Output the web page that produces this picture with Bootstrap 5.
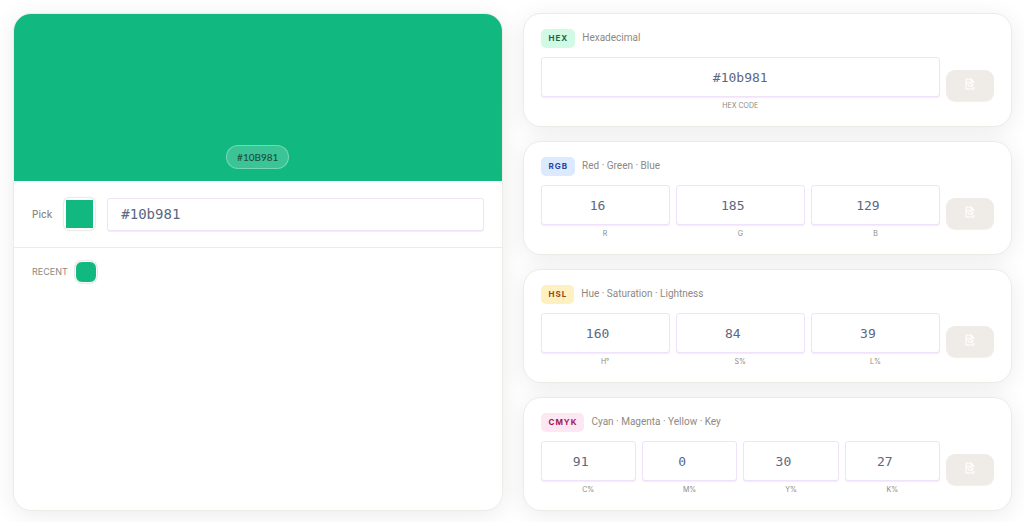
<!DOCTYPE html>
<html lang="en">
<head>
<meta charset="utf-8">
<meta name="viewport" content="width=device-width, initial-scale=1">
<title>Color Converter</title>
<link href="https://cdn.jsdelivr.net/npm/bootstrap@5.3.0/dist/css/bootstrap.min.css" rel="stylesheet">
<style>
:root { --pick: #11b981; --line: #ecebe6; --muted: #8d8982; --lilac: #f0e2fa; }
body { font-family: Inter, "Liberation Sans", sans-serif; font-size: 10px; line-height: 12px; color: var(--muted); background: #fff; }
.page { padding: 13px 12px 11px 13px; }
.page > .row { --bs-gutter-x: 20px; }
.formats { gap: 14px; }
.panel { border: 1px solid var(--line); border-radius: 18px; background: #fff; box-shadow: 0 4px 24px rgba(0,0,0,.08); }
.preview { height: 167px; padding-bottom: 12px; background: var(--pick); }
.hex-pill { padding: 5px 10px; color: #1b4d3a; background: rgba(255,255,255,.18); border: 1px solid rgba(255,255,255,.3); font-family: Lato, sans-serif; font-size: 10px; font-weight: 500; }
.pick-row { padding: 16px 18px; gap: 11px; border-bottom: 1px solid var(--line); }
.pick-row label { font-weight: 500; }
.recent-row { padding: 13px 18px; gap: 7px; font-size: 9px; }
.swatch-input { width: 33px; height: 34px; padding: 2px; border: 1px solid var(--line); border-radius: 7px; background: #fff; flex: none; box-shadow: 0 0 1px #dedbd4; }
.swatch-input::-webkit-color-swatch-wrapper { padding: 0; }
.swatch-input::-webkit-color-swatch { border: 0; border-radius: 0; }
.recent-btn { width: 22px; height: 22px; border: 1px solid #fff; border-radius: 7px; background: var(--pick); box-shadow: 0 0 0 1px #e9e8e4; }
.value-input { font-family: "DejaVu Sans Mono", monospace; color: #5b687f; border: 1px solid var(--lilac); border-radius: 3px; background: #fff; box-shadow: 0 1px 1px #f3eafa; }
.pick-row .value-input { height: 33px; padding: 0 13px; font-size: 14px; }
.format { padding: 15px 17px 13px; }
.format-head { height: 19px; gap: 7px; margin-bottom: 9px; }
.format-name { font-family: Roboto, sans-serif; font-size: 10px; line-height: 12px; padding-bottom: 2px; }
.tag { padding: 3px 7px 3px 8px; border-radius: 5px; font-size: 8px; line-height: 13px; font-weight: 700; letter-spacing: 1px; }
.tag-hex { background: #d1fae5; color: #12674b; }
.tag-rgb { background: #dbeafe; color: #2743a0; }
.tag-hsl { background: #fef0c0; color: #994415; }
.tag-cmyk { background: #fce7f3; color: #a31955; }
.fields { gap: 6px; }
.field { flex: 1 1 0; min-width: 0; height: 56px; }
.field .value-input { height: 40px; padding: 0 10px; font-size: 13px; text-align: center; }
.field label { font-size: 7px; padding-top: 3px; text-align: center; }
.copy-btn { width: 48px; height: 31px; border: 0; border-radius: 9px; background: #efece7; color: #fff; box-shadow: 0 1px 1px #f2f0ed; flex: none; }
.copy-btn svg { display: block; margin: 0 auto 3px; }
</style>
</head>
<body>
<svg class="d-none">
  <symbol id="copy" viewBox="0 0 10 12">
    <path d="M1 1h5l3 3v1M1 1v10h8V9M6 1v3h3M2 4h3M2 6h5M3 8h5M6 5l2 2-2 2" fill="none" stroke="currentColor" stroke-width="1.200"/>
  </symbol>
</svg>
<main class="container-fluid page">
  <div class="row">
    <div class="col-6 d-flex">
      <section class="panel flex-fill overflow-hidden">
        <div class="preview d-flex align-items-end justify-content-center">
          <span class="hex-pill rounded-pill">#10B981</span>
        </div>
        <div class="pick-row d-flex align-items-center">
          <label for="pick">Pick</label>
          <input type="color" id="pick" class="swatch-input" value="#11b981">
          <input type="text" class="value-input flex-fill" aria-label="Color value" value="#10b981">
        </div>
        <div class="recent-row d-flex align-items-center">
          <span>RECENT</span>
          <button type="button" class="recent-btn p-0" aria-label="#10b981"></button>
        </div>
      </section>
    </div>
    <div class="col-6 d-flex flex-column formats">
      <section class="panel format">
        <div class="format-head d-flex align-items-center"><span class="tag tag-hex">HEX</span><span class="format-name">Hexadecimal</span></div>
        <div class="fields d-flex align-items-center">
          <div class="field d-flex flex-column"><input type="text" id="hex" class="value-input w-100" value="#10b981"><label for="hex">HEX CODE</label></div>
          <button type="button" class="copy-btn p-0" aria-label="Copy HEX"><svg width="10" height="12"><use href="#copy"/></svg></button>
        </div>
      </section>
      <section class="panel format">
        <div class="format-head d-flex align-items-center"><span class="tag tag-rgb">RGB</span><span class="format-name">Red · Green · Blue</span></div>
        <div class="fields d-flex align-items-center">
          <div class="field d-flex flex-column"><input type="number" id="r" class="value-input w-100" value="16"><label for="r">R</label></div>
          <div class="field d-flex flex-column"><input type="number" id="g" class="value-input w-100" value="185"><label for="g">G</label></div>
          <div class="field d-flex flex-column"><input type="number" id="b" class="value-input w-100" value="129"><label for="b">B</label></div>
          <button type="button" class="copy-btn p-0" aria-label="Copy RGB"><svg width="10" height="12"><use href="#copy"/></svg></button>
        </div>
      </section>
      <section class="panel format">
        <div class="format-head d-flex align-items-center"><span class="tag tag-hsl">HSL</span><span class="format-name">Hue · Saturation · Lightness</span></div>
        <div class="fields d-flex align-items-center">
          <div class="field d-flex flex-column"><input type="number" id="h" class="value-input w-100" value="160"><label for="h">H°</label></div>
          <div class="field d-flex flex-column"><input type="number" id="s" class="value-input w-100" value="84"><label for="s">S%</label></div>
          <div class="field d-flex flex-column"><input type="number" id="l" class="value-input w-100" value="39"><label for="l">L%</label></div>
          <button type="button" class="copy-btn p-0" aria-label="Copy HSL"><svg width="10" height="12"><use href="#copy"/></svg></button>
        </div>
      </section>
      <section class="panel format">
        <div class="format-head d-flex align-items-center"><span class="tag tag-cmyk">CMYK</span><span class="format-name">Cyan · Magenta · Yellow · Key</span></div>
        <div class="fields d-flex align-items-center">
          <div class="field d-flex flex-column"><input type="number" id="c" class="value-input w-100" value="91"><label for="c">C%</label></div>
          <div class="field d-flex flex-column"><input type="number" id="m" class="value-input w-100" value="0"><label for="m">M%</label></div>
          <div class="field d-flex flex-column"><input type="number" id="y" class="value-input w-100" value="30"><label for="y">Y%</label></div>
          <div class="field d-flex flex-column"><input type="number" id="k" class="value-input w-100" value="27"><label for="k">K%</label></div>
          <button type="button" class="copy-btn p-0" aria-label="Copy CMYK"><svg width="10" height="12"><use href="#copy"/></svg></button>
        </div>
      </section>
    </div>
  </div>
</main>
<script src="https://cdn.jsdelivr.net/npm/bootstrap@5.3.0/dist/js/bootstrap.bundle.min.js"></script>
</body>
</html>
